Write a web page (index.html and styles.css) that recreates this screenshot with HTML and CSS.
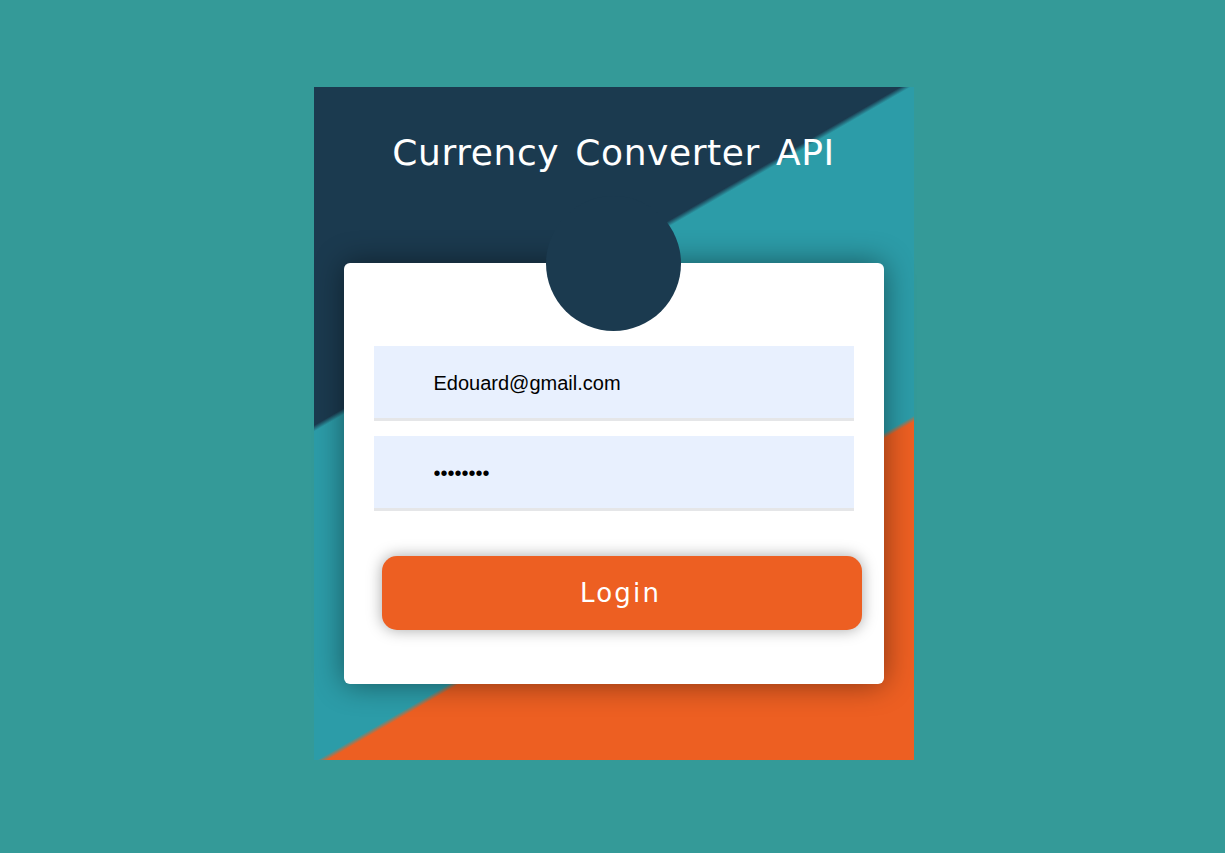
FILE: index.html
```html
<!DOCTYPE html>
<html lang="en">
<head>
<meta charset="utf-8">
<title>Currency Converter API</title>
<link rel="stylesheet" href="styles.css">
</head>
<body>
<div class="panel">
  <h1 class="title">Currency Converter API</h1>
  <form class="card">
    <div class="avatar"></div>
    <input class="field" type="email" value="Edouard@gmail.com">
    <input class="field" type="password" value="password">
    <button class="login" type="button">Login</button>
  </form>
</div>
</body>
</html>
```
FILE: styles.css
```css
html, body {
  margin: 0;
  padding: 0;
}
body {
  background: #349a98;
  min-height: 853px;
  padding: 87px 0 0 2px;
  box-sizing: border-box;
}
.panel {
  width: 600px;
  height: 673px;
  margin: 0 auto;
  padding: 0 30px;
  box-sizing: border-box;
  background: linear-gradient(150deg, #1b3a4f 33.2%, #2c9ca8 33.8%, #2c9ca8 66.2%, #ed5f22 66.8%);
  display: flex;
  flex-direction: column;
}
.title {
  margin: 0;
  padding-top: 45px;
  height: 134px;
  box-sizing: border-box;
  text-align: center;
  color: #ffffff;
  font-family: "DejaVu Sans", Verdana, sans-serif;
  font-weight: normal;
  font-size: 36px;
  letter-spacing: 0.6px;
  word-spacing: 4px;
  white-space: nowrap;
}
.card {
  margin: 42px 0 0;
  width: 540px;
  height: 421px;
  box-sizing: border-box;
  padding: 0 30px;
  background: #ffffff;
  border-radius: 6px;
  box-shadow: 0 0 30px rgba(0, 0, 0, 0.45);
  display: flex;
  flex-direction: column;
}
.avatar {
  width: 135px;
  height: 135px;
  border-radius: 50%;
  background: #1b3a4f;
  margin: -67px auto 15px;
  flex: none;
}
.field {
  display: block;
  width: 480px;
  height: 75px;
  box-sizing: border-box;
  margin: 0 0 15px;
  padding: 3px 0 0 60px;
  border: none;
  border-bottom: 3px solid #e5e6e8;
  background: #e8f0fe;
  color: #000000;
  font-family: "Liberation Sans", Arial, sans-serif;
  font-size: 20px;
  outline: none;
  flex: none;
}
.login {
  margin: 30px 0 0 8px;
  width: 480px;
  height: 74px;
  flex: none;
  border: none;
  border-radius: 15px;
  background: #ed5f22;
  color: #ffffff;
  font-family: "DejaVu Sans", Verdana, sans-serif;
  font-size: 26px;
  letter-spacing: 2.2px;
  padding: 0 2px 0 0;
  box-shadow: 0 0 15px rgba(0, 0, 0, 0.35);
  cursor: pointer;
}
```
